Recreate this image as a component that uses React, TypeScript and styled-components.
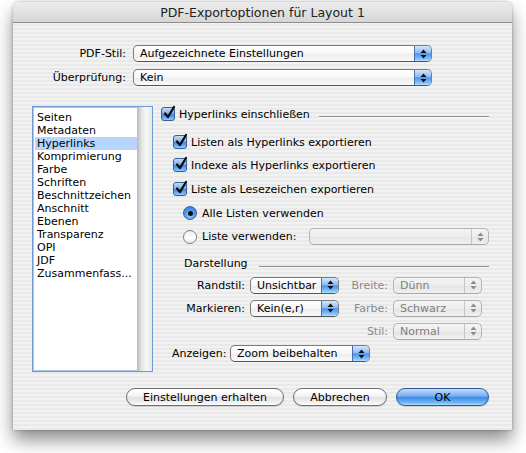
import React from "react";
import styled, { createGlobalStyle, css } from "styled-components";

const GlobalStyle = createGlobalStyle`
  html, body {
    margin: 0;
    padding: 0;
    background: #ffffff;
  }
  body {
    width: 526px;
    height: 453px;
    overflow: hidden;
    font-family: "DejaVu Sans", "Liberation Sans", sans-serif;
    font-size: 11px;
    color: #000;
  }
`;

const Screen = styled.div`
  width: 526px;
  height: 453px;
  padding: 2px 14px 0 13px;
  box-sizing: border-box;
`;

const Window = styled.div`
  width: 499px;
  height: 428px;
  display: flex;
  flex-direction: column;
  border-radius: 6px 6px 0 0;
  background: repeating-linear-gradient(
    to bottom,
    #f2f2f2 0px,
    #f2f2f2 2px,
    #e9e9e9 2px,
    #e9e9e9 4px
  );
  box-shadow: 0 10px 18px rgba(0, 0, 0, 0.45), 0 0 3px rgba(0, 0, 0, 0.3);
  overflow: hidden;
`;

const TitleBar = styled.div`
  height: 21px;
  flex: none;
  box-sizing: border-box;
  display: flex;
  align-items: center;
  justify-content: center;
  font-size: 12.5px;
  color: #222;
  background: linear-gradient(to bottom, #ececec, #d6d6d6);
  border-bottom: 1px solid #8c8c8c;
`;

const Body = styled.div`
  flex: 1;
  display: flex;
  flex-direction: column;
  padding: 22px 23px 0 19px;
`;

const TopForm = styled.div`
  display: grid;
  grid-template-columns: 94px 299px;
  column-gap: 7px;
  row-gap: 7px;
  align-items: center;
`;

const FieldLabel = styled.div<{ $disabled?: boolean }>`
  text-align: right;
  white-space: nowrap;
  color: ${(p) => (p.$disabled ? "#8a8a8a" : "#000")};
`;

const PopupBox = styled.div<{ $disabled?: boolean; $w?: number }>`
  position: relative;
  height: 17px;
  box-sizing: border-box;
  ${(p) => p.$w && css`width: ${p.$w}px;`}
  display: flex;
  align-items: stretch;
  border-radius: 5px;
  border: 1px solid ${(p) => (p.$disabled ? "#b5b5b5" : "#7b7b7b")};
  border-bottom-color: ${(p) => (p.$disabled ? "#a8a8a8" : "#555")};
  background: ${(p) =>
    p.$disabled
      ? "linear-gradient(to bottom, #f4f4f4, #ececec 50%, #e4e4e4 51%, #f0f0f0)"
      : "linear-gradient(to bottom, #ffffff, #f6f6f6 50%, #ebebeb 51%, #fafafa)"};
  overflow: hidden;
`;

const PopupText = styled.div<{ $disabled?: boolean }>`
  flex: 1;
  padding-left: 6px;
  display: flex;
  align-items: center;
  white-space: nowrap;
  color: ${(p) => (p.$disabled ? "#7d7d7d" : "#000")};
`;

const PopupArrows = styled.div<{ $disabled?: boolean }>`
  width: 16px;
  flex: none;
  display: flex;
  align-items: center;
  justify-content: center;
  ${(p) =>
    p.$disabled
      ? css`
          border-left: 1px solid #c4c4c4;
        `
      : css`
          border-left: 1px solid #4a6fa8;
          background: linear-gradient(
            to bottom,
            #d3e6fc,
            #8dbcf2 45%,
            #4d93ea 52%,
            #7fc0fb 85%,
            #b4e0ff
          );
        `}
`;

const Arrows: React.FC<{ color: string }> = ({ color }) => (
  <svg width="7" height="10" viewBox="0 0 7 10">
    <path d="M3.5 0.5 L6.5 4 L0.5 4 Z" fill={color} />
    <path d="M0.5 6 L6.5 6 L3.5 9.5 Z" fill={color} />
  </svg>
);

const Popup: React.FC<{ value: string; disabled?: boolean; width?: number }> = ({
  value,
  disabled,
  width,
}) => (
  <PopupBox $disabled={disabled} $w={width}>
    <PopupText $disabled={disabled}>{value}</PopupText>
    <PopupArrows $disabled={disabled}>
      <Arrows color={disabled ? "#8d8d8d" : "#111"} />
    </PopupArrows>
  </PopupBox>
);

const Main = styled.div`
  display: flex;
  margin-top: 20px;
  height: 266px;
  gap: 8px;
`;

const ListBox = styled.div`
  width: 121px;
  flex: none;
  box-sizing: border-box;
  display: flex;
  border: 1px solid #6f9ad3;
  box-shadow: inset 0 0 0 1px #a9c6ec;
  background: #fff;
  padding: 2px;
`;

const ListItems = styled.ul`
  flex: 1;
  margin: 0;
  padding: 2px 0 0 0;
  list-style: none;
`;

const ListItem = styled.li<{ $selected?: boolean }>`
  height: 13px;
  line-height: 13px;
  padding-left: 2px;
  white-space: nowrap;
  background: ${(p) => (p.$selected ? "#b5d5fe" : "transparent")};
`;

const ScrollTrack = styled.div`
  width: 15px;
  flex: none;
  margin: -2px -2px -2px 0;
  background: linear-gradient(to right, #b9b9b9, #e3e3e3 30%, #f7f7f7 60%, #e8e8e8);
`;

const Panel = styled.div`
  flex: 1;
  display: flex;
  flex-direction: column;
`;

const Row = styled.div<{ $top: number; $indent?: number; $h?: number }>`
  display: flex;
  align-items: center;
  height: ${(p) => p.$h ?? 14}px;
  margin-top: ${(p) => p.$top}px;
  padding-left: ${(p) => p.$indent ?? 0}px;
  white-space: nowrap;
`;

const Rule = styled.div<{ $drop: number; $gap: number }>`
  flex: 1;
  height: 1px;
  margin-left: ${(p) => p.$gap}px;
  margin-top: ${(p) => p.$drop * 2}px;
  background: #8e8e8e;
  box-shadow: 0 1px 0 #fbfbfb;
`;

const BoxMark = styled.div`
  width: 14px;
  height: 14px;
  flex: none;
  position: relative;
  box-sizing: border-box;
  border-radius: 3px;
  border: 1px solid #35609c;
  background: linear-gradient(to bottom, #c6ddf8, #7fb0ee 45%, #3f88e6 55%, #8ccaff);
  margin-right: 4px;
`;

const CheckGlyph = styled.svg`
  position: absolute;
  left: 1px;
  top: -3px;
`;

const Checkbox: React.FC = () => (
  <BoxMark>
    <CheckGlyph width="13" height="15" viewBox="0 0 13 15">
      <path
        d="M2 8.5 L5 12 L11 2"
        fill="none"
        stroke="#0a0a0a"
        strokeWidth="2.3"
        strokeLinecap="round"
        strokeLinejoin="round"
      />
    </CheckGlyph>
  </BoxMark>
);

const RadioMark = styled.div<{ $on?: boolean }>`
  width: 14px;
  height: 14px;
  flex: none;
  box-sizing: border-box;
  border-radius: 50%;
  margin-right: 5px;
  display: flex;
  align-items: center;
  justify-content: center;
  ${(p) =>
    p.$on
      ? css`
          border: 1px solid #35609c;
          background: radial-gradient(circle at 50% 70%, #9ad3ff, #4c92e8 55%, #3a78cf);
        `
      : css`
          border: 1px solid #7d7d7d;
          background: linear-gradient(to bottom, #f0f0f0, #ffffff 60%, #e6e6e6);
        `}
`;

const RadioDot = styled.div`
  width: 5px;
  height: 5px;
  border-radius: 50%;
  background: #0c0c0c;
`;

const StyleGrid = styled.div`
  margin-top: 6px;
  display: grid;
  grid-template-columns: 84px 89px 44px 89px;
  grid-auto-rows: 18px;
  column-gap: 5px;
  row-gap: 5px;
  align-items: center;
`;

const ButtonRow = styled.div`
  display: flex;
  justify-content: flex-end;
  margin-top: 16px;
  gap: 9px;
`;

const PushButton = styled.button<{ $primary?: boolean; $w: number }>`
  width: ${(p) => p.$w}px;
  height: 18px;
  padding: 0;
  font: inherit;
  color: #000;
  border-radius: 9px;
  border: 1px solid ${(p) => (p.$primary ? "#2d579a" : "#6f6f6f")};
  background: ${(p) =>
    p.$primary
      ? "linear-gradient(to bottom, #c3dcf8, #77aef0 45%, #3f89e6 52%, #6fb6fb 85%, #a9dcff)"
      : "linear-gradient(to bottom, #ffffff, #f3f3f3 45%, #e2e2e2 52%, #f1f1f1 85%, #ffffff)"};
  box-shadow: 0 1px 1px rgba(0, 0, 0, 0.15);
`;

const PopupSlot = styled.div`
  margin-left: auto;
`;

const AnzLabel = styled.div`
  width: 58px;
`;

const categories = [
  "Seiten",
  "Metadaten",
  "Hyperlinks",
  "Komprimierung",
  "Farbe",
  "Schriften",
  "Beschnittzeichen",
  "Anschnitt",
  "Ebenen",
  "Transparenz",
  "OPI",
  "JDF",
  "Zusammenfass...",
];

const App: React.FC = () => {
  return (
    <>
      <GlobalStyle />
      <Screen>
        <Window>
          <TitleBar>PDF-Exportoptionen für Layout 1</TitleBar>
          <Body>
            <TopForm>
              <FieldLabel>PDF-Stil:</FieldLabel>
              <Popup value="Aufgezeichnete Einstellungen" />
              <FieldLabel>Überprüfung:</FieldLabel>
              <Popup value="Kein" />
            </TopForm>

            <Main>
              <ListBox>
                <ListItems>
                  {categories.map((c) => (
                    <ListItem key={c} $selected={c === "Hyperlinks"}>
                      {c}
                    </ListItem>
                  ))}
                </ListItems>
                <ScrollTrack />
              </ListBox>

              <Panel>
                <Row $top={1}>
                  <Checkbox />
                  Hyperlinks einschließen
                  <Rule $drop={2} $gap={9} />
                </Row>
                <Row $top={14} $indent={12}>
                  <Checkbox />
                  Listen als Hyperlinks exportieren
                </Row>
                <Row $top={9} $indent={12}>
                  <Checkbox />
                  Indexe als Hyperlinks exportieren
                </Row>
                <Row $top={10} $indent={12}>
                  <Checkbox />
                  Liste als Lesezeichen exportieren
                </Row>
                <Row $top={10} $indent={22}>
                  <RadioMark $on>
                    <RadioDot />
                  </RadioMark>
                  Alle Listen verwenden
                </Row>
                <Row $top={8} $indent={22} $h={17}>
                  <RadioMark />
                  Liste verwenden:
                  <PopupSlot>
                    <Popup value="" disabled width={180} />
                  </PopupSlot>
                </Row>
                <Row $top={11} $indent={23}>
                  Darstellung
                  <Rule $drop={3} $gap={11} />
                </Row>
                <StyleGrid>
                  <FieldLabel>Randstil:</FieldLabel>
                  <Popup value="Unsichtbar" />
                  <FieldLabel $disabled>Breite:</FieldLabel>
                  <Popup value="Dünn" disabled />
                  <FieldLabel>Markieren:</FieldLabel>
                  <Popup value="Kein(e,r)" />
                  <FieldLabel $disabled>Farbe:</FieldLabel>
                  <Popup value="Schwarz" disabled />
                  <span />
                  <span />
                  <FieldLabel $disabled>Stil:</FieldLabel>
                  <Popup value="Normal" disabled />
                </StyleGrid>
                <Row $top={5} $indent={11} $h={17}>
                  <AnzLabel>Anzeigen:</AnzLabel>
                  <Popup value="Zoom beibehalten" width={140} />
                </Row>
              </Panel>
            </Main>

            <ButtonRow>
              <PushButton $w={158}>Einstellungen erhalten</PushButton>
              <PushButton $w={94}>Abbrechen</PushButton>
              <PushButton $w={93} $primary>
                OK
              </PushButton>
            </ButtonRow>
          </Body>
        </Window>
      </Screen>
    </>
  );
};

export default App;
